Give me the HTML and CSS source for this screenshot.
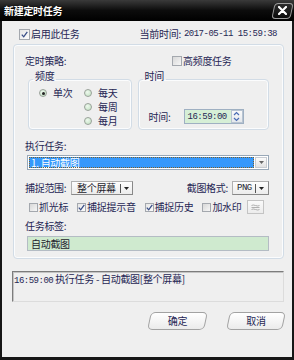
FILE: index.html
```html
<!DOCTYPE html>
<html lang="zh-CN">
<head>
    <meta charset="UTF-8">
    <title>新建定时任务</title>
    <link rel="stylesheet" href="styles.css">
</head>
<body>
    <div class="window">
        <div class="titlebar">
            <span class="title">新建定时任务</span>
            <span class="close">
                <svg width="9" height="9" viewBox="0 0 9 9"><path d="M1 1 L8 8 M8 1 L1 8" stroke="#fff" stroke-width="2.2" stroke-linecap="round"/></svg>
            </span>
        </div>

        <div class="client">
            <div class="top-row">
                <label class="check big checked"><span class="box"></span>启用此任务</label>
                <div class="now">当前时间: <span class="mono">2017-05-11 15:59:38</span></div>
            </div>

            <div class="panel">
                <div class="strategy-row">
                    <span class="strategy-label">定时策略:</span>
                    <label class="check"><span class="box"></span>高频度任务</label>
                </div>

                <div class="groups">
                    <fieldset class="group freq">
                        <legend>频度</legend>
                        <div class="radios">
                            <label class="radio on"><span class="dot"></span>单次</label>
                            <label class="radio"><span class="dot"></span>每天</label>
                            <span></span>
                            <label class="radio"><span class="dot"></span>每周</label>
                            <span></span>
                            <label class="radio"><span class="dot"></span>每月</label>
                        </div>
                    </fieldset>
                    <fieldset class="group time">
                        <legend>时间</legend>
                        <div class="time-row">
                            <span class="time-label">时间:</span>
                            <div class="spin-input">
                                <span class="mono">16:59:00</span>
                                <span class="spin">
                                    <svg width="7" height="11" viewBox="0 0 7 11"><path d="M1 4 L3.5 1.5 L6 4 M1 7 L3.5 9.5 L6 7" fill="none" stroke="#4a6cb4" stroke-width="1.2"/></svg>
                                </span>
                            </div>
                        </div>
                    </fieldset>
                </div>

                <div class="row-label task-label">执行任务:</div>
                <div class="combo">
                    <span class="sel">1. 自动截图</span>
                    <span class="arrow"><svg width="5" height="3" viewBox="0 0 5 3"><path d="M0 0 H5 L2.5 3 Z" fill="#666"/></svg></span>
                </div>

                <div class="capture-row">
                    <span class="capture-label">捕捉范围:</span>
                    <span class="drop wide">整个屏幕<span class="sep"></span><svg width="5" height="3" viewBox="0 0 5 3"><path d="M0 0 H5 L2.5 3 Z" fill="#222"/></svg></span>
                    <div class="fmt">
                        <span>截图格式:</span>
                        <span class="drop narrow"><span class="mono">PNG</span><span class="sep"></span><svg width="5" height="3" viewBox="0 0 5 3"><path d="M0 0 H5 L2.5 3 Z" fill="#222"/></svg></span>
                    </div>
                </div>

                <div class="options">
                    <label class="check"><span class="box"></span>抓光标</label>
                    <label class="check checked"><span class="box"></span>捕捉提示音</label>
                    <label class="check checked"><span class="box"></span>捕捉历史</label>
                    <label class="check"><span class="box"></span>加水印</label>
                    <span class="tool">
                        <svg width="9" height="7" viewBox="0 0 9 7"><path d="M0.5 1.5 Q2 0.5 4.5 1.5 T8.5 1.5 M0.5 3.5 H8.5 M0.5 5.5 Q2 4.5 4.5 5.5 T8.5 5.5" fill="none" stroke="#a8a8a8" stroke-width="0.9"/></svg>
                    </span>
                </div>

                <div class="row-label tag-label">任务标签:</div>
                <div class="tag-input">自动截图</div>
            </div>

            <div class="log"><span class="mono">16:59:00</span> 执行任务 - 自动截图[整个屏幕]</div>

            <div class="actions">
                <button class="btn ok">确定</button>
                <button class="btn cancel">取消</button>
            </div>
        </div>
    </div>
</body>
</html>
```

FILE: styles.css
```css
* {
    margin: 0;
    padding: 0;
    box-sizing: border-box;
}

body {
    width: 294px;
    height: 360px;
    overflow: hidden;
    background: #efefef;
    color: #262654;
    font-family: "Noto Sans CJK SC", "Noto Sans", sans-serif;
    font-size: 10px;
    line-height: 12px;
    letter-spacing: -0.3px;
}

.mono {
    font-family: "Liberation Mono", monospace;
    font-size: 9px;
    letter-spacing: -0.5px;
}

.window {
    width: 294px;
    height: 360px;
    display: flex;
    flex-direction: column;
}

/* title bar */
.titlebar {
    height: 21px;
    flex: none;
    display: flex;
    align-items: center;
    justify-content: space-between;
    padding: 0 1px 0 4px;
    background: linear-gradient(#3a3a3a, #0c0c0c 50%, #000);
}

.title {
    color: #fff;
    font-weight: bold;
    text-shadow: 0 0 2px #000;
}

.close {
    position: relative;
    width: 21px;
    height: 16px;
    display: flex;
    align-items: center;
    justify-content: center;
    isolation: isolate;
}

.close::before {
    content: "";
    position: absolute;
    inset: 0 1px;
    border: 1px solid #9c9c9c;
    border-radius: 4px;
    background: linear-gradient(#2c2c2c, #0a0a0a);
    transform: skewX(-12deg);
    z-index: -1;
}

/* client area */
.client {
    flex: 1;
    display: flex;
    flex-direction: column;
    background: #efefef;
    border: solid #161616;
    border-width: 0 2px 3px 2px;
}

.top-row {
    height: 23px;
    flex: none;
    display: flex;
    align-items: center;
    padding: 3px 15px 0 17px;
}

.now {
    margin-left: auto;
    display: flex;
    align-items: center;
    gap: 3px;
}

/* checkboxes */
.check {
    display: flex;
    align-items: center;
    gap: 1px;
    white-space: nowrap;
}

.check .box {
    width: 10px;
    height: 10px;
    border: 1px solid #a4a8ae;
    background: linear-gradient(135deg, #d8d8d8, #f6f6f6);
    display: flex;
    align-items: center;
    justify-content: center;
}

.check.big .box {
    width: 11px;
    height: 11px;
}

.check.checked .box {
    background: linear-gradient(135deg, #e6e6e6, #fcfcfc);
}

.check.checked .box::after {
    content: "";
    width: 7px;
    height: 7px;
    background: url("data:image/svg+xml;utf8,<svg xmlns='http://www.w3.org/2000/svg' width='7' height='7' viewBox='0 0 7 7'><path d='M0.8 3.6 L2.7 5.8 L6.3 0.8' fill='none' stroke='%233a4f88' stroke-width='1.3'/></svg>") no-repeat center;
}

/* main panel */
.panel {
    height: 215px;
    flex: none;
    margin: 0 8px 0 11px;
    padding: 0 14px 0 11px;
    border: 1px solid #d2dce6;
    border-radius: 4px;
    box-shadow: inset 0 0 0 1px #fbfcfd;
}

.strategy-row {
    margin-top: 9px;
    height: 14px;
    display: flex;
    align-items: center;
}

.strategy-label {
    width: 147px;
}

.groups {
    margin: 2px 0 0 3px;
    display: flex;
    gap: 6px;
}

.group {
    min-width: 0;
    border: 1px solid #d2dce6;
    border-radius: 4px;
    padding: 0 0 1px 10px;
    box-shadow: inset 0 0 0 1px #fbfcfd;
}

.group legend {
    margin-left: -6px;
    padding: 0 2px 6px;
    line-height: 12px;
}

.freq {
    width: 104px;
}

.time {
    width: 132px;
}

.radios {
    margin-top: -2px;
    display: grid;
    grid-template-columns: 45px auto;
    grid-auto-rows: 14px;
}

.radio {
    display: flex;
    align-items: center;
    gap: 6px;
}

.radio .dot {
    width: 8px;
    height: 8px;
    border-radius: 50%;
    border: 1px solid #9aa29a;
    background: radial-gradient(circle at 40% 35%, #eef8ee, #bfe0bf);
    display: flex;
    align-items: center;
    justify-content: center;
}

.radio.on .dot::after {
    content: "";
    width: 3px;
    height: 3px;
    border-radius: 50%;
    background: #222;
}

.time-row {
    margin-top: 21px;
    height: 15px;
    display: flex;
    align-items: center;
}

.time-label {
    width: 35px;
}

.spin-input {
    width: 60px;
    height: 15px;
    display: flex;
    align-items: center;
    padding-left: 3px;
    border: 1px solid #9fb0c2;
    background: #d6efd6;
}

.spin {
    margin-left: auto;
    width: 12px;
    height: 13px;
    display: flex;
    align-items: center;
    justify-content: center;
    border: 1px solid #b8c4d2;
    background: linear-gradient(#fafafa, #e4e8ec);
}

/* task selection */
.task-label {
    margin-top: 10px;
}

.combo {
    margin: 3px 0 0 2px;
    width: 242px;
    height: 15px;
    display: flex;
    padding: 1px;
    border: 1px solid #98a8b8;
    background: #fff;
}

.combo .sel {
    flex: 1;
    padding-left: 2px;
    color: #fff;
    line-height: 11px;
    background: #3598fb;
    outline: 1px dotted #7a6030;
    outline-offset: -1px;
}

.combo .arrow {
    width: 12px;
    margin-left: 1px;
    display: flex;
    align-items: center;
    justify-content: center;
    border: 1px solid #c8ccd2;
    background: linear-gradient(#fbfbfb, #e2e2e2);
}

.capture-row {
    margin-top: 11px;
    height: 14px;
    display: flex;
    align-items: center;
}

.capture-label {
    width: 46px;
}

.drop {
    height: 14px;
    display: flex;
    align-items: center;
    padding-left: 5px;
    border: 1px solid #b0b0b0;
    border-right-color: #888;
    border-bottom-color: #888;
    background: linear-gradient(#fdfdfd, #ececec);
    color: #1c1c2c;
}

.drop.wide {
    width: 62px;
}

.drop.narrow {
    width: 37px;
    padding-left: 4px;
}

.drop .sep {
    width: 1px;
    height: 9px;
    margin: 0 3px 0 4px;
    background: #555;
}

.drop.narrow .sep {
    margin-left: 3px;
}

.fmt {
    margin-left: auto;
    display: flex;
    align-items: center;
    gap: 4px;
}

.options {
    margin-top: 5px;
    height: 14px;
    padding-left: 4px;
    display: flex;
    align-items: center;
    gap: 9px;
}

.options .box {
    width: 9px;
    height: 9px;
}

.options .tool {
    margin-left: -4px;
    width: 17px;
    height: 14px;
    display: flex;
    align-items: center;
    justify-content: center;
    border: 1px solid #c4c4c4;
    background: linear-gradient(#fafafa, #ececec);
}

.tag-label {
    margin-top: 6px;
}

.tag-input {
    margin: 4px 0 0 2px;
    width: 242px;
    height: 15px;
    padding-left: 3px;
    line-height: 13px;
    border: 1px solid #b4bcc4;
    background: #cfeacf;
    color: #1c1c2c;
}

/* log */
.log {
    margin: 12px 8px 0 10px;
    height: 31px;
    flex: none;
    padding: 1px 0 0 1px;
    border: 1px solid;
    border-color: #7c7c7c #dcdcdc #dcdcdc #7c7c7c;
    box-shadow: inset 1px 1px 0 #c4c4c4;
    white-space: nowrap;
}

/* buttons */
.actions {
    margin-top: 10px;
    padding-right: 6px;
    display: flex;
    justify-content: flex-end;
    gap: 18px;
}

.btn {
    position: relative;
    height: 18px;
    border: none;
    background: none;
    font: inherit;
    letter-spacing: inherit;
    color: #262654;
    isolation: isolate;
}

.btn::before {
    content: "";
    position: absolute;
    inset: 0 2px;
    border: 1px solid #a2a2a2;
    border-radius: 5px;
    background: linear-gradient(#ffffff, #ebebeb);
    transform: skewX(-12deg);
    z-index: -1;
}

.btn.ok {
    width: 61px;
}

.btn.cancel {
    width: 60px;
}
```
